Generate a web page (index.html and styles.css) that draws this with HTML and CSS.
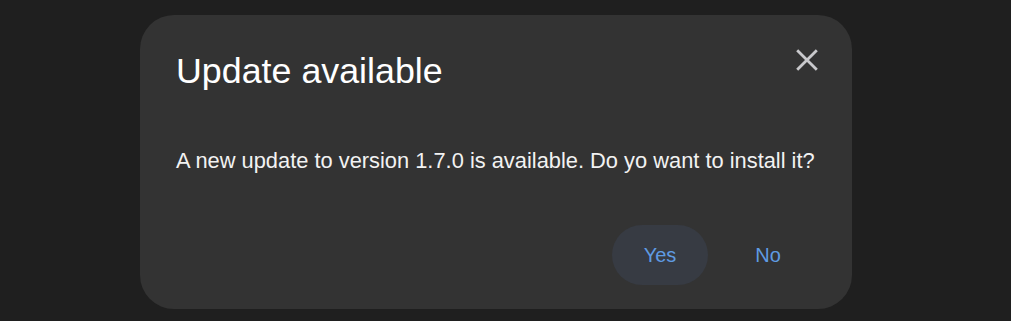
FILE: index.html
```html
<!DOCTYPE html>
<html lang="en">
<head>
<meta charset="utf-8">
<title>Update available</title>
<link rel="stylesheet" href="styles.css">
</head>
<body>
<div class="dialog" role="dialog" aria-labelledby="dlg-title">
  <div class="dialog-header">
    <h2 class="dialog-title" id="dlg-title">Update available</h2>
    <button class="close-btn" aria-label="Close">
      <svg viewBox="0 0 22 22" width="22" height="22" aria-hidden="true">
        <path d="M1.2 1.2 L20.8 20.8 M20.8 1.2 L1.2 20.8" stroke="currentColor" stroke-width="2.8" stroke-linecap="butt" fill="none"/>
      </svg>
    </button>
  </div>
  <p class="dialog-body">A new update to version 1.7.0 is available. Do yo want to install it?</p>
  <div class="dialog-actions">
    <button class="action-btn is-primary">Yes</button>
    <button class="action-btn">No</button>
  </div>
</div>
</body>
</html>
```
FILE: styles.css
```css
html, body {
  margin: 0;
  padding: 0;
  background: #1f1f1f;
  font-family: "Liberation Sans", Arial, sans-serif;
}

body {
  width: 1011px;
  height: 321px;
  overflow: hidden;
}

.dialog {
  box-sizing: border-box;
  margin: 15px 0 0 140px;
  width: 712px;
  height: 294px;
  padding: 36px 36px 24px;
  background: #333333;
  border-radius: 34px;
  display: flex;
  flex-direction: column;
}

.dialog-header {
  display: flex;
  justify-content: space-between;
  align-items: flex-start;
  height: 40px;
}

.dialog-title {
  margin: 0;
  font-size: 35.8px;
  line-height: 40px;
  font-weight: 400;
  color: #ffffff;
}

.close-btn {
  width: 40px;
  height: 40px;
  margin: -11px -11px 0 0;
  padding: 0;
  border: 0;
  background: transparent;
  color: #c9c9cc;
  display: flex;
  align-items: center;
  justify-content: center;
  cursor: pointer;
}

.close-btn svg {
  display: block;
}

.dialog-body {
  margin: 56px 0 0;
  font-size: 21.85px;
  line-height: 28px;
  color: #f2f2f2;
}

.dialog-actions {
  margin-top: 50px;
  display: flex;
  justify-content: flex-end;
  gap: 12px;
}

.action-btn {
  width: 96px;
  height: 60px;
  border: 0;
  border-radius: 30px;
  padding: 0;
  background: transparent;
  color: #5f9be3;
  font-family: "Liberation Sans", Arial, sans-serif;
  font-size: 20px;
  cursor: pointer;
}

.action-btn.is-primary {
  background: #373b43;
}
```
